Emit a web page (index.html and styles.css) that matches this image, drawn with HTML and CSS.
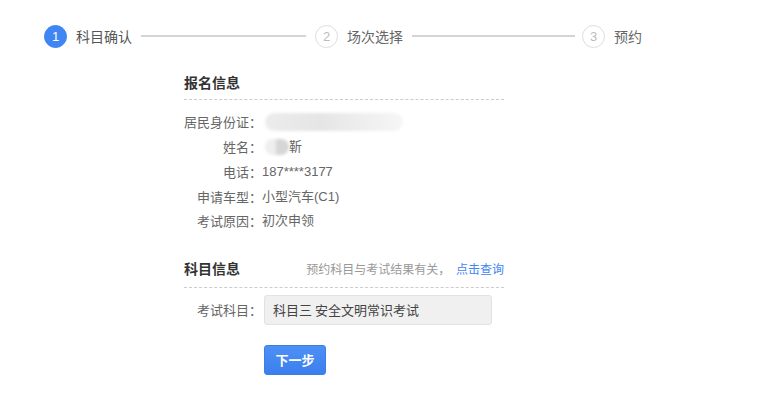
FILE: index.html
```html
<!DOCTYPE html>
<html lang="zh">
<head>
<meta charset="utf-8">
<link rel="stylesheet" href="styles.css">
</head>
<body>
<div class="steps">
  <div class="step active"><span class="num">1</span><span class="label">科目确认</span></div>
  <div class="bar"></div>
  <div class="step"><span class="num">2</span><span class="label">场次选择</span></div>
  <div class="bar bar-2"></div>
  <div class="step"><span class="num">3</span><span class="label">预约</span></div>
</div>

<div class="panel">
  <div class="section-head">
    <h3>报名信息</h3>
  </div>
  <div class="rows">
    <div class="row"><span class="key">居民身份证：</span><span class="val"><span class="blur blur-id"></span></span></div>
    <div class="row"><span class="key">姓名：</span><span class="val"><span class="blur blur-name"></span>靳</span></div>
    <div class="row"><span class="key">电话：</span><span class="val">187****3177</span></div>
    <div class="row"><span class="key">申请车型：</span><span class="val">小型汽车(C1)</span></div>
    <div class="row"><span class="key">考试原因：</span><span class="val">初次申领</span></div>
  </div>

  <div class="section-head second">
    <h3>科目信息</h3>
    <span class="hint">预约科目与考试结果有关， <a class="link">点击查询</a></span>
  </div>
  <div class="row field">
    <span class="key">考试科目：</span>
    <div class="select">科目三 安全文明常识考试</div>
  </div>
  <div class="actions">
    <button class="btn">下一步</button>
  </div>
</div>
</body>
</html>
```
FILE: styles.css
```css
* { box-sizing: border-box; }
body {
  margin: 0;
  background: #fff;
  font-family: "Noto Sans CJK SC", "Microsoft YaHei", sans-serif;
  color: #666;
  font-size: 13px;
}
.steps {
  display: flex;
  align-items: center;
  padding: 24px 0 0 44px;
  height: 48px;
}
.step {
  display: flex;
  align-items: center;
  gap: 9px;
}
.num {
  width: 23px;
  height: 23px;
  border-radius: 50%;
  border: 1px solid #ddd;
  color: #bbb;
  display: flex;
  align-items: center;
  justify-content: center;
  font-family: "Liberation Sans", Arial, sans-serif;
  font-size: 13px;
}
.step.active .num {
  background: #3f85f3;
  border-color: #3f85f3;
  color: #fff;
}
.label {
  font-size: 14px;
  color: #666;
  line-height: 20px;
}
.step.active .label { color: #555; }
.bar {
  width: 165px;
  height: 2px;
  background: #d4d4d4;
  margin: 0 9px;
}
.bar-2 { width: 163px; margin-right: 7px; }
.panel {
  width: 320px;
  margin: 17px 0 0 184px;
}
.section-head {
  display: flex;
  justify-content: space-between;
  align-items: center;
  border-bottom: 1px dashed #ccc;
  height: 35px;
  padding-bottom: 1px;
}
.section-head h3 {
  margin: 0;
  font-size: 14px;
  font-weight: bold;
  color: #333;
}
.section-head.second { margin-top: 18px; height: 36px; padding-bottom: 2px; }
.hint { color: #999; font-size: 12px; }
.link { color: #3f85f3; margin-left: 3px; }
.rows { padding-top: 10px; }
.row {
  display: flex;
  align-items: center;
  height: 24.75px;
  line-height: 20px;
}
.key {
  width: 78px;
  text-align: right;
  color: #666;
  white-space: nowrap;
}
.val {
  color: #666;
  display: flex;
  align-items: center;
  font-family: "Liberation Sans", "Noto Sans CJK SC", sans-serif;
}
.blur {
  display: inline-block;
  border-radius: 9px;
  filter: blur(1.5px);
}
.blur-id {
  width: 138px;
  height: 18px;
  margin-left: 3px;
  background: linear-gradient(90deg, #ececec, #e5e5e5 40%, #eeeeee 70%, #f6f6f6);
}
.blur-name {
  width: 24px;
  height: 16px;
  margin-left: 3px;
  background: linear-gradient(90deg, #eeeeee 45%, #d6d6d6 45%);
}
.field { margin-top: 7px; height: 30px; }
.select {
  width: 228px;
  height: 30px;
  margin-left: 2px;
  background: #f0f0f0;
  border: 1px solid #e2e2e2;
  border-radius: 3px;
  padding: 0 8px;
  display: flex;
  align-items: center;
  color: #444;
  font-size: 13px;
}
.actions { padding: 20px 0 0 80px; }
.btn {
  width: 62px;
  height: 30px;
  border: 1px solid #3c7ee6;
  border-radius: 3px;
  background: linear-gradient(#4d90f6, #3a7fee);
  color: #fff;
  font-weight: bold;
  font-size: 13px;
  font-family: "Noto Sans CJK SC", sans-serif;
  padding: 0;
}
```
